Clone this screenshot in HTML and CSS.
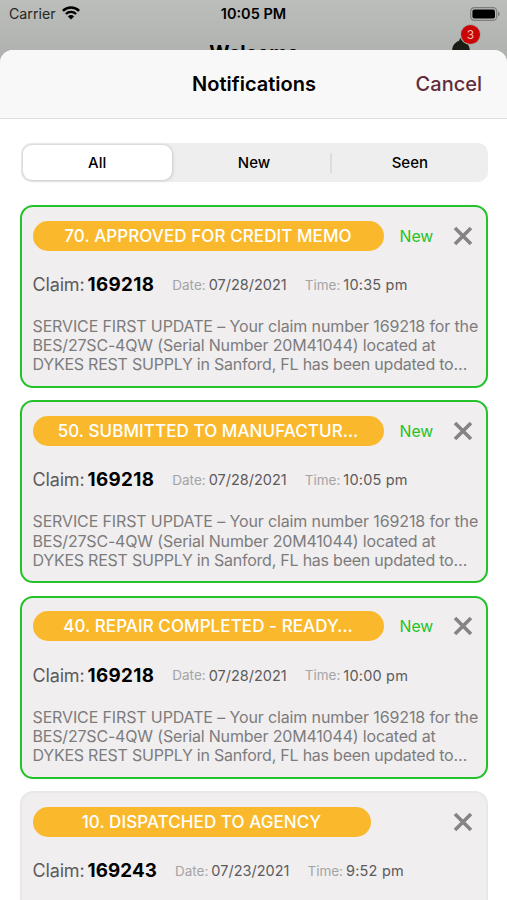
FILE: index.html
```html
<!DOCTYPE html>
<html lang="en">

<head>
    <meta charset="utf-8">
    <meta name="viewport" content="width=device-width, initial-scale=1.0">
    <title>Notifications</title>
    <link rel="stylesheet" href="styles.css">
</head>

<body>

    <div class="behind">
        <div class="statusbar">
            <div class="carrier">
                <span>Carrier</span>
                <svg class="wifi" viewBox="0 0 18 14" width="18" height="14">
                    <path d="M0.9 4.9 A11.6 11.6 0 0 1 17.1 4.9" fill="none" stroke="#000" stroke-width="2.5" />
                    <path d="M3.9 8 A7.3 7.3 0 0 1 14.1 8" fill="none" stroke="#000" stroke-width="2.3" />
                    <path d="M9 13.6 L5.9 10.5 A4.5 4.5 0 0 1 12.1 10.5 Z" fill="#000" />
                </svg>
            </div>
            <div class="clock">10:05 PM</div>
            <svg class="battery" viewBox="0 0 31 14" width="31" height="14">
                <rect x="0.7" y="0.7" width="26" height="12.6" rx="3.6" fill="none" stroke="#7c7e7b" stroke-width="1.2" />
                <rect x="2.4" y="2.4" width="22.6" height="9.2" rx="2" fill="#000" />
                <path d="M28 4.6 C30.4 5.6 30.4 8.4 28 9.4 Z" fill="#7c7e7b" />
            </svg>
        </div>
        <div class="welcome">
            <h1>Welcome</h1>
            <div class="bell">
                <svg viewBox="0 0 18 12" width="18" height="12">
                    <path d="M9 0 C10 0 10.4 1 10.6 2.4 C14.5 4 17.6 7 17.8 12 L0.2 12 C0.4 7 3.5 4 7.4 2.4 C7.6 1 8 0 9 0 Z" fill="#181e14" />
                </svg>
                <span class="badge">3</span>
            </div>
        </div>
    </div>

    <main class="sheet">
        <header>
            <h2>Notifications</h2>
            <a class="cancel">Cancel</a>
        </header>

        <nav>
            <button class="valgt">All</button>
            <button>New</button>
            <button>Seen</button>
        </nav>

        <section id="liste">
            <article class="new">
                <div class="top">
                    <h3 class="status">70. APPROVED FOR CREDIT MEMO</h3>
                    <span class="tag">New</span>
                    <svg class="close" viewBox="0 0 20 20" width="20" height="20"><path d="M2 2 L18 18 M18 2 L2 18" /></svg>
                </div>
                <div class="info">
                    <span class="claim">Claim:</span><b class="nr">169218</b>
                    <span class="label">Date:</span><span class="date">07/28/2021</span>
                    <span class="label">Time:</span><span class="time">10:35 pm</span>
                </div>
                <p><span class="l1">SERVICE FIRST UPDATE – Your claim number 169218 for the</span><br><span class="l2">BES/27SC-4QW (Serial Number 20M41044) located at</span><br><span class="l3">DYKES REST SUPPLY in Sanford, FL has been updated to…</span></p>
            </article>

            <article class="new">
                <div class="top">
                    <h3 class="status">50. SUBMITTED TO MANUFACTUR…</h3>
                    <span class="tag">New</span>
                    <svg class="close" viewBox="0 0 20 20" width="20" height="20"><path d="M2 2 L18 18 M18 2 L2 18" /></svg>
                </div>
                <div class="info">
                    <span class="claim">Claim:</span><b class="nr">169218</b>
                    <span class="label">Date:</span><span class="date">07/28/2021</span>
                    <span class="label">Time:</span><span class="time">10:05 pm</span>
                </div>
                <p><span class="l1">SERVICE FIRST UPDATE – Your claim number 169218 for the</span><br><span class="l2">BES/27SC-4QW (Serial Number 20M41044) located at</span><br><span class="l3">DYKES REST SUPPLY in Sanford, FL has been updated to…</span></p>
            </article>

            <article class="new">
                <div class="top">
                    <h3 class="status">40. REPAIR COMPLETED - READY…</h3>
                    <span class="tag">New</span>
                    <svg class="close" viewBox="0 0 20 20" width="20" height="20"><path d="M2 2 L18 18 M18 2 L2 18" /></svg>
                </div>
                <div class="info">
                    <span class="claim">Claim:</span><b class="nr">169218</b>
                    <span class="label">Date:</span><span class="date">07/28/2021</span>
                    <span class="label">Time:</span><span class="time">10:00 pm</span>
                </div>
                <p><span class="l1">SERVICE FIRST UPDATE – Your claim number 169218 for the</span><br><span class="l2">BES/27SC-4QW (Serial Number 20M41044) located at</span><br><span class="l3">DYKES REST SUPPLY in Sanford, FL has been updated to…</span></p>
            </article>

            <article>
                <div class="top">
                    <h3 class="status short">10. DISPATCHED TO AGENCY</h3>
                    <svg class="close" viewBox="0 0 20 20" width="20" height="20"><path d="M2 2 L18 18 M18 2 L2 18" /></svg>
                </div>
                <div class="info">
                    <span class="claim">Claim:</span><b class="nr">169243</b>
                    <span class="label">Date:</span><span class="date">07/23/2021</span>
                    <span class="label">Time:</span><span class="time">9:52 pm</span>
                </div>
            </article>
        </section>
    </main>

</body>

</html>
```

FILE: styles.css
```css
* {
    box-sizing: border-box;
    margin: 0;
    padding: 0;
}

body {
    height: 900px;
    overflow: hidden;
    background-color: #b1b3b0;
    font-family: Inter, "Liberation Sans", sans-serif;
    color: #000;
    white-space: nowrap;
}

/* the screen behind the sheet */
.behind {
    height: 50px;
    overflow: hidden;
    background: linear-gradient(to bottom, #bcbebb, #b1b3b0);
}

.statusbar {
    display: grid;
    grid-template-columns: 1fr auto 1fr;
    align-items: center;
    height: 27px;
    padding: 0 6px 0 9px;
}

.carrier {
    display: flex;
    align-items: center;
    gap: 6px;
    font-size: 14.2px;
    color: #262725;
}

.wifi {
    margin-top: -2px;
}

.clock {
    margin-left: -3px;
    font-size: 14.5px;
    font-weight: 600;
}

.battery {
    justify-self: end;
}

.welcome {
    display: flex;
    justify-content: center;
    padding-top: 14px;
}

.welcome h1 {
    margin-left: 1px;
    font-size: 19.6px;
    line-height: 24px;
    font-weight: 700;
}

.bell {
    position: absolute;
    left: 451.5px;
    top: 38px;
    height: 12px;
}

.bell svg {
    display: block;
}

.badge {
    position: absolute;
    left: 9.5px;
    top: -13px;
    width: 19px;
    height: 19px;
    border-radius: 50%;
    background-color: #cb0505;
    box-shadow: 0 0 0 1px #aaa9a7;
    color: #f0bcb8;
    font-size: 12px;
    line-height: 19px;
    text-align: center;
}

.sheet {
    height: 850px;
    overflow: hidden;
    border-radius: 13px 13px 0 0;
    background-color: #fff;
}

header {
    display: grid;
    grid-template-columns: 1fr auto 1fr;
    align-items: center;
    height: 69px;
    padding: 0 25px;
    border-bottom: 1px solid #dedede;
    background-color: #f8f8f8;
}

header h2 {
    grid-column: 2;
    margin-left: 1px;
    font-size: 20px;
    font-weight: 600;
}

.cancel {
    justify-self: end;
    font-size: 20px;
    font-weight: 500;
    color: #642b3b;
}

nav {
    display: grid;
    grid-template-columns: repeat(3, 1fr);
    height: 39px;
    margin: 24px 19.5px 0 20.5px;
    padding: 2px;
    border-radius: 10px;
    background-color: #eeeeee;
}

nav button {
    position: relative;
    border: none;
    border-radius: 9px;
    background: none;
    font-family: inherit;
    font-size: 15px;
    font-weight: 500;
    color: #000;
}

nav button.valgt {
    margin-right: 5px;
    background-color: #fff;
    box-shadow: 0 0 2px 1px rgba(0, 0, 0, 0.08), 1px 1px 4px rgba(0, 0, 0, 0.08);
}

nav button:last-child {
    padding-left: 3px;
}

nav button:last-child::before {
    content: "";
    position: absolute;
    left: -1px;
    top: 8px;
    width: 2px;
    height: 20px;
    background-color: #dddddd;
}

#liste {
    display: flex;
    flex-direction: column;
    gap: 12.4px;
    margin: 23px 19.5px 0 20px;
}

article {
    flex: none;
    height: 183px;
    padding: 13.5px 10px 0 10.5px;
    border: 2px solid #e9e8e9;
    border-radius: 13px;
    background-color: #f0eeef;
}

article.new {
    border-color: #22c228;
}

.top {
    display: flex;
    align-items: center;
    height: 30px;
}

.status {
    width: 351px;
    height: 30px;
    border-radius: 15px;
    background-color: #fab92d;
    color: #fff;
    font-size: 17px;
    line-height: 30px;
    font-weight: 500;
    letter-spacing: 0.08px;
    text-align: center;
}

.status.short {
    width: 338px;
}

.tag {
    margin-left: 16px;
    font-size: 15.8px;
    line-height: 19px;
    padding-top: 1px;
    color: #1fc326;
}

.close {
    margin-left: auto;
    margin-right: 3px;
    fill: none;
    stroke: #858485;
    stroke-width: 3.6;
}

.info {
    display: flex;
    align-items: center;
    height: 24px;
    margin-top: 22px;
    font-size: 14.5px;
    color: #5c5b5c;
}

.claim {
    font-size: 18px;
    letter-spacing: -0.15px;
}

.nr {
    margin-left: 3px;
    font-size: 18.8px;
    font-weight: 700;
    letter-spacing: 0.1px;
    color: #000;
}

.new .nr {
    letter-spacing: 0.35px;
}

.label {
    margin-left: 18px;
    margin-right: 3px;
    font-size: 13.5px;
    color: #a5a4a5;
}

.time {
    letter-spacing: 0.2px;
}

article p {
    margin-top: 20.5px;
    font-size: 16px;
    line-height: 19.2px;
    color: #7d7c7d;
}

.l1 {
    letter-spacing: -0.13px;
}

.l2 {
    letter-spacing: -0.18px;
}

.l3 {
    letter-spacing: -0.23px;
}
```
